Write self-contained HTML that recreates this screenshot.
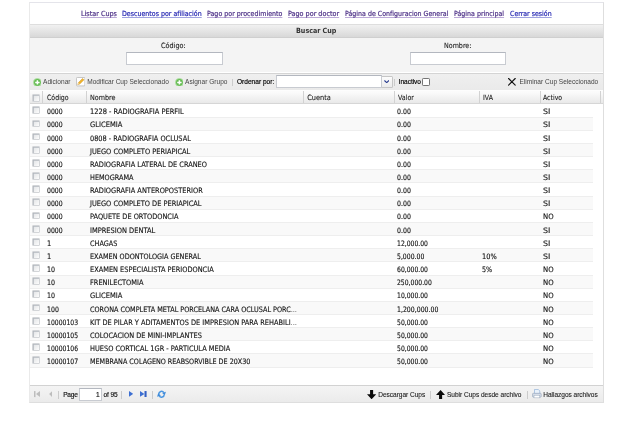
<!DOCTYPE html>
<html lang="es">
<head>
<meta charset="utf-8">
<title>Buscar Cup</title>
<style>
html,body{margin:0;padding:0;background:#fff;}
body{width:642px;height:448px;position:relative;overflow:hidden;font-family:"Liberation Sans",sans-serif;font-size:7px;color:#111;}
#wrap{position:absolute;left:29px;top:2.3px;width:575px;height:400.5px;border:1px solid #dedede;border-top-color:#e4e4ea;border-left-color:#eaeaea;background:#fff;box-sizing:border-box;}
#pg{position:absolute;left:0;top:0;width:642px;height:448px;will-change:transform;}
.abs{position:absolute;}
.t{position:absolute;white-space:nowrap;line-height:10px;height:10px;}

.ta{-webkit-text-stroke:0.1px currentColor;}
.row{-webkit-text-stroke:0.12px currentColor;}
.ta,.row{font-stretch:condensed;}
.ta{font-family:"DejaVu Sans Condensed","DejaVu Sans","Liberation Sans",sans-serif;}
.ar{font-family:"Liberation Sans",sans-serif;}
a.t{text-decoration-line:underline;-webkit-text-stroke:0.2px currentColor;text-decoration-thickness:0.8px;text-underline-offset:0.9px;text-decoration-color:#bca9d8;}
a.t.bl{text-decoration-color:#9fa2e0;}
.hv{-webkit-text-stroke:0.15px currentColor;}
.md{-webkit-text-stroke:0.1px currentColor;}
#title{position:absolute;left:29.5px;top:23.6px;width:573.5px;height:14.2px;background:linear-gradient(#f1f1f1,#d8d8d8);border-top:1px solid #dedede;border-bottom:1px solid #cfcfcf;box-sizing:border-box;}
#form{position:absolute;left:29.5px;top:37.8px;width:573.5px;height:34px;background:#f4f4f4;}
.inp{position:absolute;box-sizing:border-box;border:1px solid #c8cbd1;border-top-color:#b3b7bf;background:#fff;}
#tb{position:absolute;left:29.5px;top:73.2px;width:573.5px;height:16.4px;background:linear-gradient(#efefef,#eaeaea);border-top:1px solid #d4d4d4;box-sizing:border-box;}
#bb{position:absolute;left:29.5px;top:385.3px;width:573.5px;height:17px;background:linear-gradient(#f4f4f4,#ebebeb);border-top:1px solid #d2d2d2;box-sizing:border-box;}
.sep{position:absolute;width:1px;height:7.5px;background:#cbcbcb;}
#hd{position:absolute;left:29.5px;top:89.6px;width:573.5px;height:14.4px;background:linear-gradient(#fbfbfb 10%,#e9e9e9);border-top:1px solid #fdfdfd;border-bottom:1px solid #d6d6d6;box-sizing:border-box;}
#hd b{position:absolute;top:0;width:1px;height:12.4px;background:#d2d2d2;}
.row{position:absolute;left:29.5px;width:563px;height:13.15px;box-sizing:border-box;border-bottom:1px solid #eeeeee;font-family:"DejaVu Sans Condensed","DejaVu Sans","Liberation Sans",sans-serif;font-size:7.45px;line-height:12.4px;color:#111;}
.row em{font-style:normal;color:#8a8a8a;}
.row.alt{background:#f9f9f9;}
.row span{position:absolute;top:1.7px;white-space:nowrap;transform-origin:0 50%;}
.cb{position:absolute;left:2.6px;top:1.8px;width:8px;height:7.8px;box-sizing:border-box;border:1px solid #d3d5d8;border-radius:1px;box-shadow:inset 0.8px 0.8px 0 #b3b8be;background:linear-gradient(135deg,#dfe1e4 0%,#eff0f1 55%,#fdfdfd 100%);}
.c1{left:17.1px}.c2{left:60.3px}.c4{left:367.8px}.c5{left:452.7px}.c6{left:513.3px}
</style>
</head>
<body>
<div id="pg">
<div id="wrap"></div>
<div id="title"></div>
<div id="form">
<div class="inp" style="left:96.5px;top:14.2px;width:96.5px;height:13px"></div>
<div class="inp" style="left:380.5px;top:14.2px;width:96.3px;height:13px"></div>
</div>
<div id="tb">
<div class="inp" style="left:246.5px;top:1.2px;width:106px;height:12.4px"></div>
</div>
<div id="hd">
<i class="cb" style="top:3.6px"></i>
<b style="left:12.7px"></b>
<b style="left:56.5px"></b>
<b style="left:273.5px"></b>
<b style="left:364px"></b>
<b style="left:449.2px"></b>
<b style="left:510.5px"></b>
<b style="left:570.5px"></b>
</div>
<div class="row" style="top:104.60px"><i class="cb"></i><span class="c1" style="transform:scaleX(0.9230)">0000</span><span class="c2" style="transform:scaleX(0.9969)">1228 - RADIOGRAFIA PERFIL</span><span class="c4" style="transform:scaleX(0.9325)">0.00</span><span class="c6" style="transform:scaleX(1.1870)">SI</span></div>
<div class="row alt" style="top:117.75px"><i class="cb"></i><span class="c1" style="transform:scaleX(0.9230)">0000</span><span class="c2" style="transform:scaleX(1.0059)">GLICEMIA</span><span class="c4" style="transform:scaleX(0.9325)">0.00</span><span class="c6" style="transform:scaleX(1.1870)">SI</span></div>
<div class="row" style="top:130.90px"><i class="cb"></i><span class="c1" style="transform:scaleX(0.9230)">0000</span><span class="c2" style="transform:scaleX(0.9833)">0808 - RADIOGRAFIA OCLUSAL</span><span class="c4" style="transform:scaleX(0.9325)">0.00</span><span class="c6" style="transform:scaleX(1.1870)">SI</span></div>
<div class="row alt" style="top:144.05px"><i class="cb"></i><span class="c1" style="transform:scaleX(0.9230)">0000</span><span class="c2" style="transform:scaleX(0.9902)">JUEGO COMPLETO PERIAPICAL</span><span class="c4" style="transform:scaleX(0.9325)">0.00</span><span class="c6" style="transform:scaleX(1.1870)">SI</span></div>
<div class="row" style="top:157.20px"><i class="cb"></i><span class="c1" style="transform:scaleX(0.9230)">0000</span><span class="c2" style="transform:scaleX(0.9871)">RADIOGRAFIA LATERAL DE CRANEO</span><span class="c4" style="transform:scaleX(0.9325)">0.00</span><span class="c6" style="transform:scaleX(1.1870)">SI</span></div>
<div class="row alt" style="top:170.35px"><i class="cb"></i><span class="c1" style="transform:scaleX(0.9230)">0000</span><span class="c2" style="transform:scaleX(0.9717)">HEMOGRAMA</span><span class="c4" style="transform:scaleX(0.9325)">0.00</span><span class="c6" style="transform:scaleX(1.1870)">SI</span></div>
<div class="row" style="top:183.50px"><i class="cb"></i><span class="c1" style="transform:scaleX(0.9230)">0000</span><span class="c2" style="transform:scaleX(0.9881)">RADIOGRAFIA ANTEROPOSTERIOR</span><span class="c4" style="transform:scaleX(0.9325)">0.00</span><span class="c6" style="transform:scaleX(1.1870)">SI</span></div>
<div class="row alt" style="top:196.65px"><i class="cb"></i><span class="c1" style="transform:scaleX(0.9230)">0000</span><span class="c2" style="transform:scaleX(0.9884)">JUEGO COMPLETO DE PERIAPICAL</span><span class="c4" style="transform:scaleX(0.9325)">0.00</span><span class="c6" style="transform:scaleX(1.1870)">SI</span></div>
<div class="row" style="top:209.80px"><i class="cb"></i><span class="c1" style="transform:scaleX(0.9230)">0000</span><span class="c2" style="transform:scaleX(0.9853)">PAQUETE DE ORTODONCIA</span><span class="c4" style="transform:scaleX(0.9325)">0.00</span><span class="c6" style="transform:scaleX(1.0310)">NO</span></div>
<div class="row alt" style="top:222.95px"><i class="cb"></i><span class="c1" style="transform:scaleX(0.9230)">0000</span><span class="c2" style="transform:scaleX(0.9959)">IMPRESION DENTAL</span><span class="c4" style="transform:scaleX(0.9325)">0.00</span><span class="c6" style="transform:scaleX(1.1870)">SI</span></div>
<div class="row" style="top:236.10px"><i class="cb"></i><span class="c1" style="transform:scaleX(0.9916)">1</span><span class="c2" style="transform:scaleX(0.9691)">CHAGAS</span><span class="c4" style="transform:scaleX(0.9105)">12,000.00</span><span class="c6" style="transform:scaleX(1.1870)">SI</span></div>
<div class="row alt" style="top:249.25px"><i class="cb"></i><span class="c1" style="transform:scaleX(0.9916)">1</span><span class="c2" style="transform:scaleX(0.9682)">EXAMEN ODONTOLOGIA GENERAL</span><span class="c4" style="transform:scaleX(0.9162)">5,000.00</span><span class="c5" style="transform:scaleX(0.9882)">10%</span><span class="c6" style="transform:scaleX(1.1870)">SI</span></div>
<div class="row" style="top:262.40px"><i class="cb"></i><span class="c1" style="transform:scaleX(0.9465)">10</span><span class="c2" style="transform:scaleX(0.9861)">EXAMEN ESPECIALISTA PERIODONCIA</span><span class="c4" style="transform:scaleX(0.9105)">60,000.00</span><span class="c5" style="transform:scaleX(0.9600)">5%</span><span class="c6" style="transform:scaleX(1.0310)">NO</span></div>
<div class="row alt" style="top:275.55px"><i class="cb"></i><span class="c1" style="transform:scaleX(0.9465)">10</span><span class="c2" style="transform:scaleX(0.9905)">FRENILECTOMIA</span><span class="c4" style="transform:scaleX(0.9083)">250,000.00</span><span class="c6" style="transform:scaleX(1.0310)">NO</span></div>
<div class="row" style="top:288.70px"><i class="cb"></i><span class="c1" style="transform:scaleX(0.9465)">10</span><span class="c2" style="transform:scaleX(1.0059)">GLICEMIA</span><span class="c4" style="transform:scaleX(0.9105)">10,000.00</span><span class="c6" style="transform:scaleX(1.0310)">NO</span></div>
<div class="row alt" style="top:301.85px"><i class="cb"></i><span class="c1" style="transform:scaleX(0.9303)">100</span><span class="c2" style="transform:scaleX(0.9668)">CORONA COMPLETA METAL PORCELANA CARA OCLUSAL PORC<em>...</em></span><span class="c4" style="transform:scaleX(0.9264)">1,200,000.00</span><span class="c6" style="transform:scaleX(1.0310)">NO</span></div>
<div class="row" style="top:315.00px"><i class="cb"></i><span class="c1" style="transform:scaleX(0.9113)">10000103</span><span class="c2" style="transform:scaleX(0.9893)">KIT DE PILAR Y ADITAMENTOS DE IMPRESION PARA REHABILI<em>...</em></span><span class="c4" style="transform:scaleX(0.9105)">50,000.00</span><span class="c6" style="transform:scaleX(1.0310)">NO</span></div>
<div class="row alt" style="top:328.15px"><i class="cb"></i><span class="c1" style="transform:scaleX(0.9113)">10000105</span><span class="c2" style="transform:scaleX(0.9877)">COLOCACION DE MINI-IMPLANTES</span><span class="c4" style="transform:scaleX(0.9105)">50,000.00</span><span class="c6" style="transform:scaleX(1.0310)">NO</span></div>
<div class="row" style="top:341.30px"><i class="cb"></i><span class="c1" style="transform:scaleX(0.9113)">10000106</span><span class="c2" style="transform:scaleX(0.9885)">HUESO CORTICAL 1GR - PARTICULA MEDIA</span><span class="c4" style="transform:scaleX(0.9105)">50,000.00</span><span class="c6" style="transform:scaleX(1.0310)">NO</span></div>
<div class="row alt" style="top:354.45px"><i class="cb"></i><span class="c1" style="transform:scaleX(0.9113)">10000107</span><span class="c2" style="transform:scaleX(0.9600)">MEMBRANA COLAGENO REABSORVIBLE DE 20X30</span><span class="c4" style="transform:scaleX(0.9105)">50,000.00</span><span class="c6" style="transform:scaleX(1.0310)">NO</span></div>
<div id="bb">
<div class="inp" style="left:49.8px;top:1.4px;width:22.9px;height:13.2px"></div>
</div>
<div class="abs" style="left:381.6px;top:75.6px;width:11px;height:12.4px;box-sizing:border-box;border:1px solid #c6c6c6;border-left:none;border-radius:0 1.5px 1.5px 0;background:linear-gradient(#fcfcfc,#ececec)"></div>
<svg class="abs" style="left:32.6px;top:77.5px" width="8.8" height="8.8" viewBox="0 0 16 16"><circle cx="8" cy="8" r="7.2" fill="#7ac768" stroke="#b2dfa6" stroke-width="1.6"/><circle cx="8" cy="8" r="5.6" fill="#63ba50"/><path d="M8 4v8M4 8h8" stroke="#fff" stroke-width="2.8"/></svg>
<svg class="abs" style="left:174.7px;top:77.5px" width="8.8" height="8.8" viewBox="0 0 16 16"><circle cx="8" cy="8" r="7.2" fill="#7ac768" stroke="#b2dfa6" stroke-width="1.6"/><circle cx="8" cy="8" r="5.6" fill="#63ba50"/><path d="M8 4v8M4 8h8" stroke="#fff" stroke-width="2.8"/></svg>
<svg class="abs" style="left:76px;top:77.4px" width="9.4" height="9.4" viewBox="0 0 16 16"><rect x="0.8" y="0.8" width="14.4" height="14.4" rx="1.5" fill="#fff" stroke="#b4b4b4" stroke-width="1.3"/><path d="M3 13l1-3.4 7.2-7.2 2.4 2.4-7.2 7.2z" fill="#f0b429" stroke="#c98a1a" stroke-width="0.8"/><path d="M3 13l1-3.4 2.4 2.4z" fill="#e9d9b0"/></svg>
<svg class="abs" style="left:508px;top:78.1px" width="7.8" height="7.6" viewBox="0 0 16 16"><path d="M1 1L15 15M15 1L1 15" stroke="#111" stroke-width="2.4" stroke-linecap="round"/></svg>
<svg class="abs" style="left:383.8px;top:79.9px" width="5.4" height="3.4" viewBox="0 0 10 6"><path d="M0.8 0.8L5 4.8 9.2 0.8" fill="none" stroke="#2a3d8f" stroke-width="2"/></svg>
<svg class="abs" style="left:34.2px;top:391.4px" width="6" height="6.2" viewBox="0 0 12 12"><rect x="0" y="0" width="3" height="12" fill="#bdbdbd"/><path d="M12 0v12L4 6z" fill="#bdbdbd"/></svg>
<svg class="abs" style="left:48.5px;top:391.4px" width="3.4" height="6.2" viewBox="0 0 6 12"><path d="M6 0v12L0 6z" fill="#bdbdbd"/></svg>
<svg class="abs" style="left:128.5px;top:390.8px" width="4.1" height="5.8" viewBox="0 0 7 10"><path d="M0 0v10L7 5z" fill="#3d6fd2"/></svg>
<svg class="abs" style="left:140.3px;top:390.9px" width="6.8" height="6.4" viewBox="0 0 13 12"><path d="M0 0v11L8.4 5.5z" fill="#3d6fd2"/><rect x="8.6" y="0" width="4" height="12" fill="#3360c4"/></svg>
<svg class="abs" style="left:157.2px;top:390.2px" width="9" height="8.5" viewBox="0 0 18 17"><path d="M3.6 8A5.4 5.4 0 0 1 13.6 5.2" fill="none" stroke="#4b97e2" stroke-width="3"/><path d="M10.2 5.8L17.8 3.4 15.6 10.6z" fill="#3f8ad8"/><path d="M14.4 9A5.4 5.4 0 0 1 4.4 11.8" fill="none" stroke="#4b97e2" stroke-width="3"/><path d="M7.8 11.2L0.2 13.6 2.4 6.4z" fill="#3f8ad8"/></svg>
<svg class="abs" style="left:367px;top:389.5px" width="9.2" height="9.4" viewBox="0 0 18 18"><path d="M6 0h6v8h6l-9 10L0 8h6z" fill="#0a0a0a"/></svg>
<svg class="abs" style="left:435.8px;top:389.7px" width="9.2" height="9.2" viewBox="0 0 18 18"><path d="M6 18h6v-8h6L9 0 0 10h6z" fill="#0a0a0a"/></svg>
<svg class="abs" style="left:531.8px;top:389.4px" width="9.8" height="9.6" viewBox="0 0 20 20"><path d="M5 1h8l3 3v6H5z" fill="#e9f2fb" stroke="#7fa6d4" stroke-width="1.2"/><rect x="1" y="9" width="18" height="8" rx="1.5" fill="#d5dde8" stroke="#8d9db4" stroke-width="1.2"/><rect x="4" y="13" width="12" height="5.5" fill="#fff" stroke="#9aa8bb" stroke-width="1"/></svg>
<i class="sep" style="left:232px;top:78.5px"></i>
<i class="sep" style="left:393.8px;top:78.5px"></i>
<i class="sep" style="left:58px;top:391px"></i>
<i class="sep" style="left:121.4px;top:391px"></i>
<i class="sep" style="left:152px;top:391px"></i>
<i class="sep" style="left:430.4px;top:391px"></i>
<i class="sep" style="left:527.4px;top:391px"></i>
<div class="abs" style="left:422.4px;top:78.4px;width:7.6px;height:7.6px;box-sizing:border-box;border:1px solid #767676;border-radius:1.2px;background:#fff"></div>

<a class="t ta" style="left:80.50px;top:9.26px;font-size:7.05px;color:#4f3388;transform:scaleX(1.0153);transform-origin:0 50%;">Listar Cups</a>
<a class="t ta bl" style="left:121.70px;top:9.26px;font-size:7.05px;color:#2a2cb4;transform:scaleX(0.9943);transform-origin:0 50%;">Descuentos por afiliación</a>
<a class="t ta" style="left:207.00px;top:9.26px;font-size:7.05px;color:#4f3388;transform:scaleX(0.9974);transform-origin:0 50%;">Pago por procedimiento</a>
<a class="t ta" style="left:288.00px;top:9.26px;font-size:7.05px;color:#4f3388;transform:scaleX(1.0182);transform-origin:0 50%;">Pago por doctor</a>
<a class="t ta" style="left:345.00px;top:9.26px;font-size:7.05px;color:#4f3388;transform:scaleX(0.9938);transform-origin:0 50%;">Página de Configuracion General</a>
<a class="t ta" style="left:454.00px;top:9.26px;font-size:7.05px;color:#4f3388;transform:scaleX(0.9933);transform-origin:0 50%;">Página principal</a>
<a class="t ta bl" style="left:510.00px;top:9.26px;font-size:7.05px;color:#2a2cb4;transform:scaleX(0.9895);transform-origin:0 50%;">Cerrar sesión</a>
<span class="t ta" style="left:296.25px;top:25.81px;font-size:7.2px;color:#333;transform:scaleX(0.9854);transform-origin:0 50%;font-weight:bold;-webkit-text-stroke:0;">Buscar Cup</span>
<span class="t ta" style="left:161.25px;top:41.17px;font-size:7.3px;color:#222;transform:scaleX(0.9860);transform-origin:0 50%;">Código:</span>
<span class="t ta" style="left:443.50px;top:41.17px;font-size:7.3px;color:#222;transform:scaleX(0.9688);transform-origin:0 50%;">Nombre:</span>
<span class="t ar" style="left:43.00px;top:77.03px;font-size:6.55px;color:#444;letter-spacing:0.025px;">Adicionar</span>
<span class="t ar" style="left:87.25px;top:77.03px;font-size:6.55px;color:#444;">Modificar Cup Seleccionado</span>
<span class="t ar" style="left:185.00px;top:77.03px;font-size:6.55px;color:#444;letter-spacing:0.023px;">Asignar Grupo</span>
<span class="t ar hv" style="left:237.00px;top:77.33px;font-size:6.55px;color:#000;letter-spacing:0.011px;">Ordenar por:</span>
<span class="t ar hv" style="left:398.60px;top:77.33px;font-size:6.55px;color:#000;letter-spacing:-0.023px;">Inactivo</span>
<span class="t ar" style="left:519.50px;top:77.03px;font-size:6.55px;color:#444;letter-spacing:0.006px;">Eliminar Cup Seleccionado</span>
<span class="t ta" style="left:46.75px;top:93.37px;font-size:7.3px;color:#222;transform:scaleX(0.9503);transform-origin:0 50%;">Código</span>
<span class="t ta" style="left:90.00px;top:93.37px;font-size:7.3px;color:#222;transform:scaleX(0.9740);transform-origin:0 50%;">Nombre</span>
<span class="t ta" style="left:307.25px;top:93.37px;font-size:7.3px;color:#222;">Cuenta</span>
<span class="t ta" style="left:397.50px;top:93.37px;font-size:7.3px;color:#222;transform:scaleX(0.9645);transform-origin:0 50%;">Valor</span>
<span class="t ta" style="left:483.00px;top:93.37px;font-size:7.3px;color:#222;transform:scaleX(0.9471);transform-origin:0 50%;">IVA</span>
<span class="t ta" style="left:543.25px;top:93.37px;font-size:7.3px;color:#222;transform:scaleX(0.9442);transform-origin:0 50%;">Activo</span>
<span class="t ar hv" style="left:63.20px;top:389.53px;font-size:6.55px;color:#111;letter-spacing:-0.232px;">Page</span>
<span class="t ar hv" style="left:96.04px;top:389.53px;font-size:6.55px;color:#111;">1</span>
<span class="t ar hv" style="left:103.40px;top:389.53px;font-size:6.55px;color:#111;letter-spacing:-0.066px;">of 95</span>
<span class="t ar md" style="left:378.25px;top:389.53px;font-size:6.55px;color:#222;letter-spacing:-0.024px;">Descargar Cups</span>
<span class="t ar md" style="left:447.00px;top:389.53px;font-size:6.55px;color:#222;letter-spacing:-0.020px;">Subir Cups desde archivo</span>
<span class="t ar md" style="left:543.25px;top:389.53px;font-size:6.55px;color:#222;letter-spacing:-0.027px;">Hallazgos archivos</span>
</div>
</body>
</html>
